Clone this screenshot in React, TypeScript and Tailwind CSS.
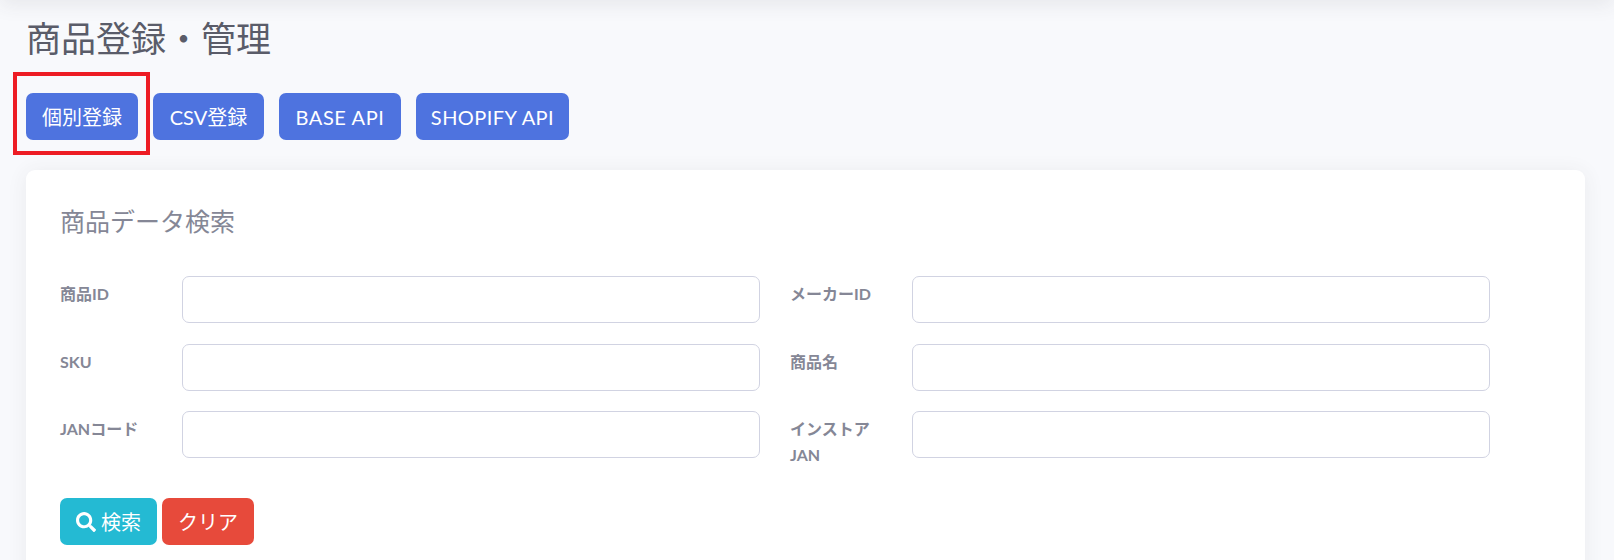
import React from "react";
import { FaSearch } from "react-icons/fa";

const fontStack = "font-['Lato','Noto_Sans_CJK_JP',sans-serif]";

const TopButton = ({ label, className }: { label: string; className: string }) => (
  <button className={`h-[47px] rounded-[7px] bg-[#4e73df] text-[20px] text-white ${className}`}>
    {label}
  </button>
);

const Field = ({ label }: { label: React.ReactNode }) => (
  <div className="flex">
    <label className="w-[122px] pt-[5px] text-[16px] leading-[26px] font-bold text-[#858796]">
      {label}
    </label>
    <input
      type="text"
      className="h-[47px] w-[578px] rounded-[7px] border border-[#d1d3e2] bg-white"
    />
  </div>
);

const App: React.FC = () => {
  return (
    <div className={`${fontStack} relative h-[560px] overflow-hidden bg-[#f8f9fc] pl-[26px]`}>
      {/* top bar shadow */}
      <div className="absolute top-[-20px] left-0 h-[20px] w-full shadow-[0_4px_20px_rgba(58,59,69,0.1)]"></div>

      <h1 className="pt-[16px] text-[35px] leading-[44px] font-normal text-[#5a5c69]">
        商品登録・管理
      </h1>

      <div className="relative mt-[33px] flex gap-[15px]">
        <div className="absolute top-[-21px] left-[-13px] h-[83px] w-[137px] border-[4px] border-[#ed1c24]"></div>
        <TopButton label="個別登録" className="w-[112px]" />
        <TopButton label="CSV登録" className="w-[111px]" />
        <TopButton label="BASE API" className="w-[122px] tracking-[0.6px]" />
        <TopButton label="SHOPIFY API" className="w-[153px] tracking-[0.45px]" />
      </div>

      <div className="mt-[30px] h-[500px] w-[1559px] rounded-[9px] bg-white pt-[36px] pl-[34px] shadow-[0_2px_20px_rgba(58,59,69,0.08)]">
        <h2 className="text-[25px] leading-[30px] font-normal text-[#858796]">商品データ検索</h2>

        <div className="mt-[40px] grid w-[1430px] grid-cols-[700px_700px] gap-x-[30px] gap-y-[20.5px]">
          <Field label="商品ID" />
          <Field label="メーカーID" />
          <Field label="SKU" />
          <Field label="商品名" />
          <Field label="JANコード" />
          <Field
            label={
              <>
                インストア
                <br />
                JAN
              </>
            }
          />
        </div>

        <div className="mt-[30px] flex gap-[5px]">
          <button className="flex h-[47px] w-[97px] items-center justify-center gap-[5px] rounded-[7px] bg-[#24bad3] text-[20px] text-white">
            <FaSearch className="h-[20px] w-[20px]" />
            検索
          </button>
          <button className="h-[47px] w-[92px] rounded-[7px] bg-[#e74a3b] text-[20px] text-white">
            クリア
          </button>
        </div>
      </div>
    </div>
  );
};

export default App;
